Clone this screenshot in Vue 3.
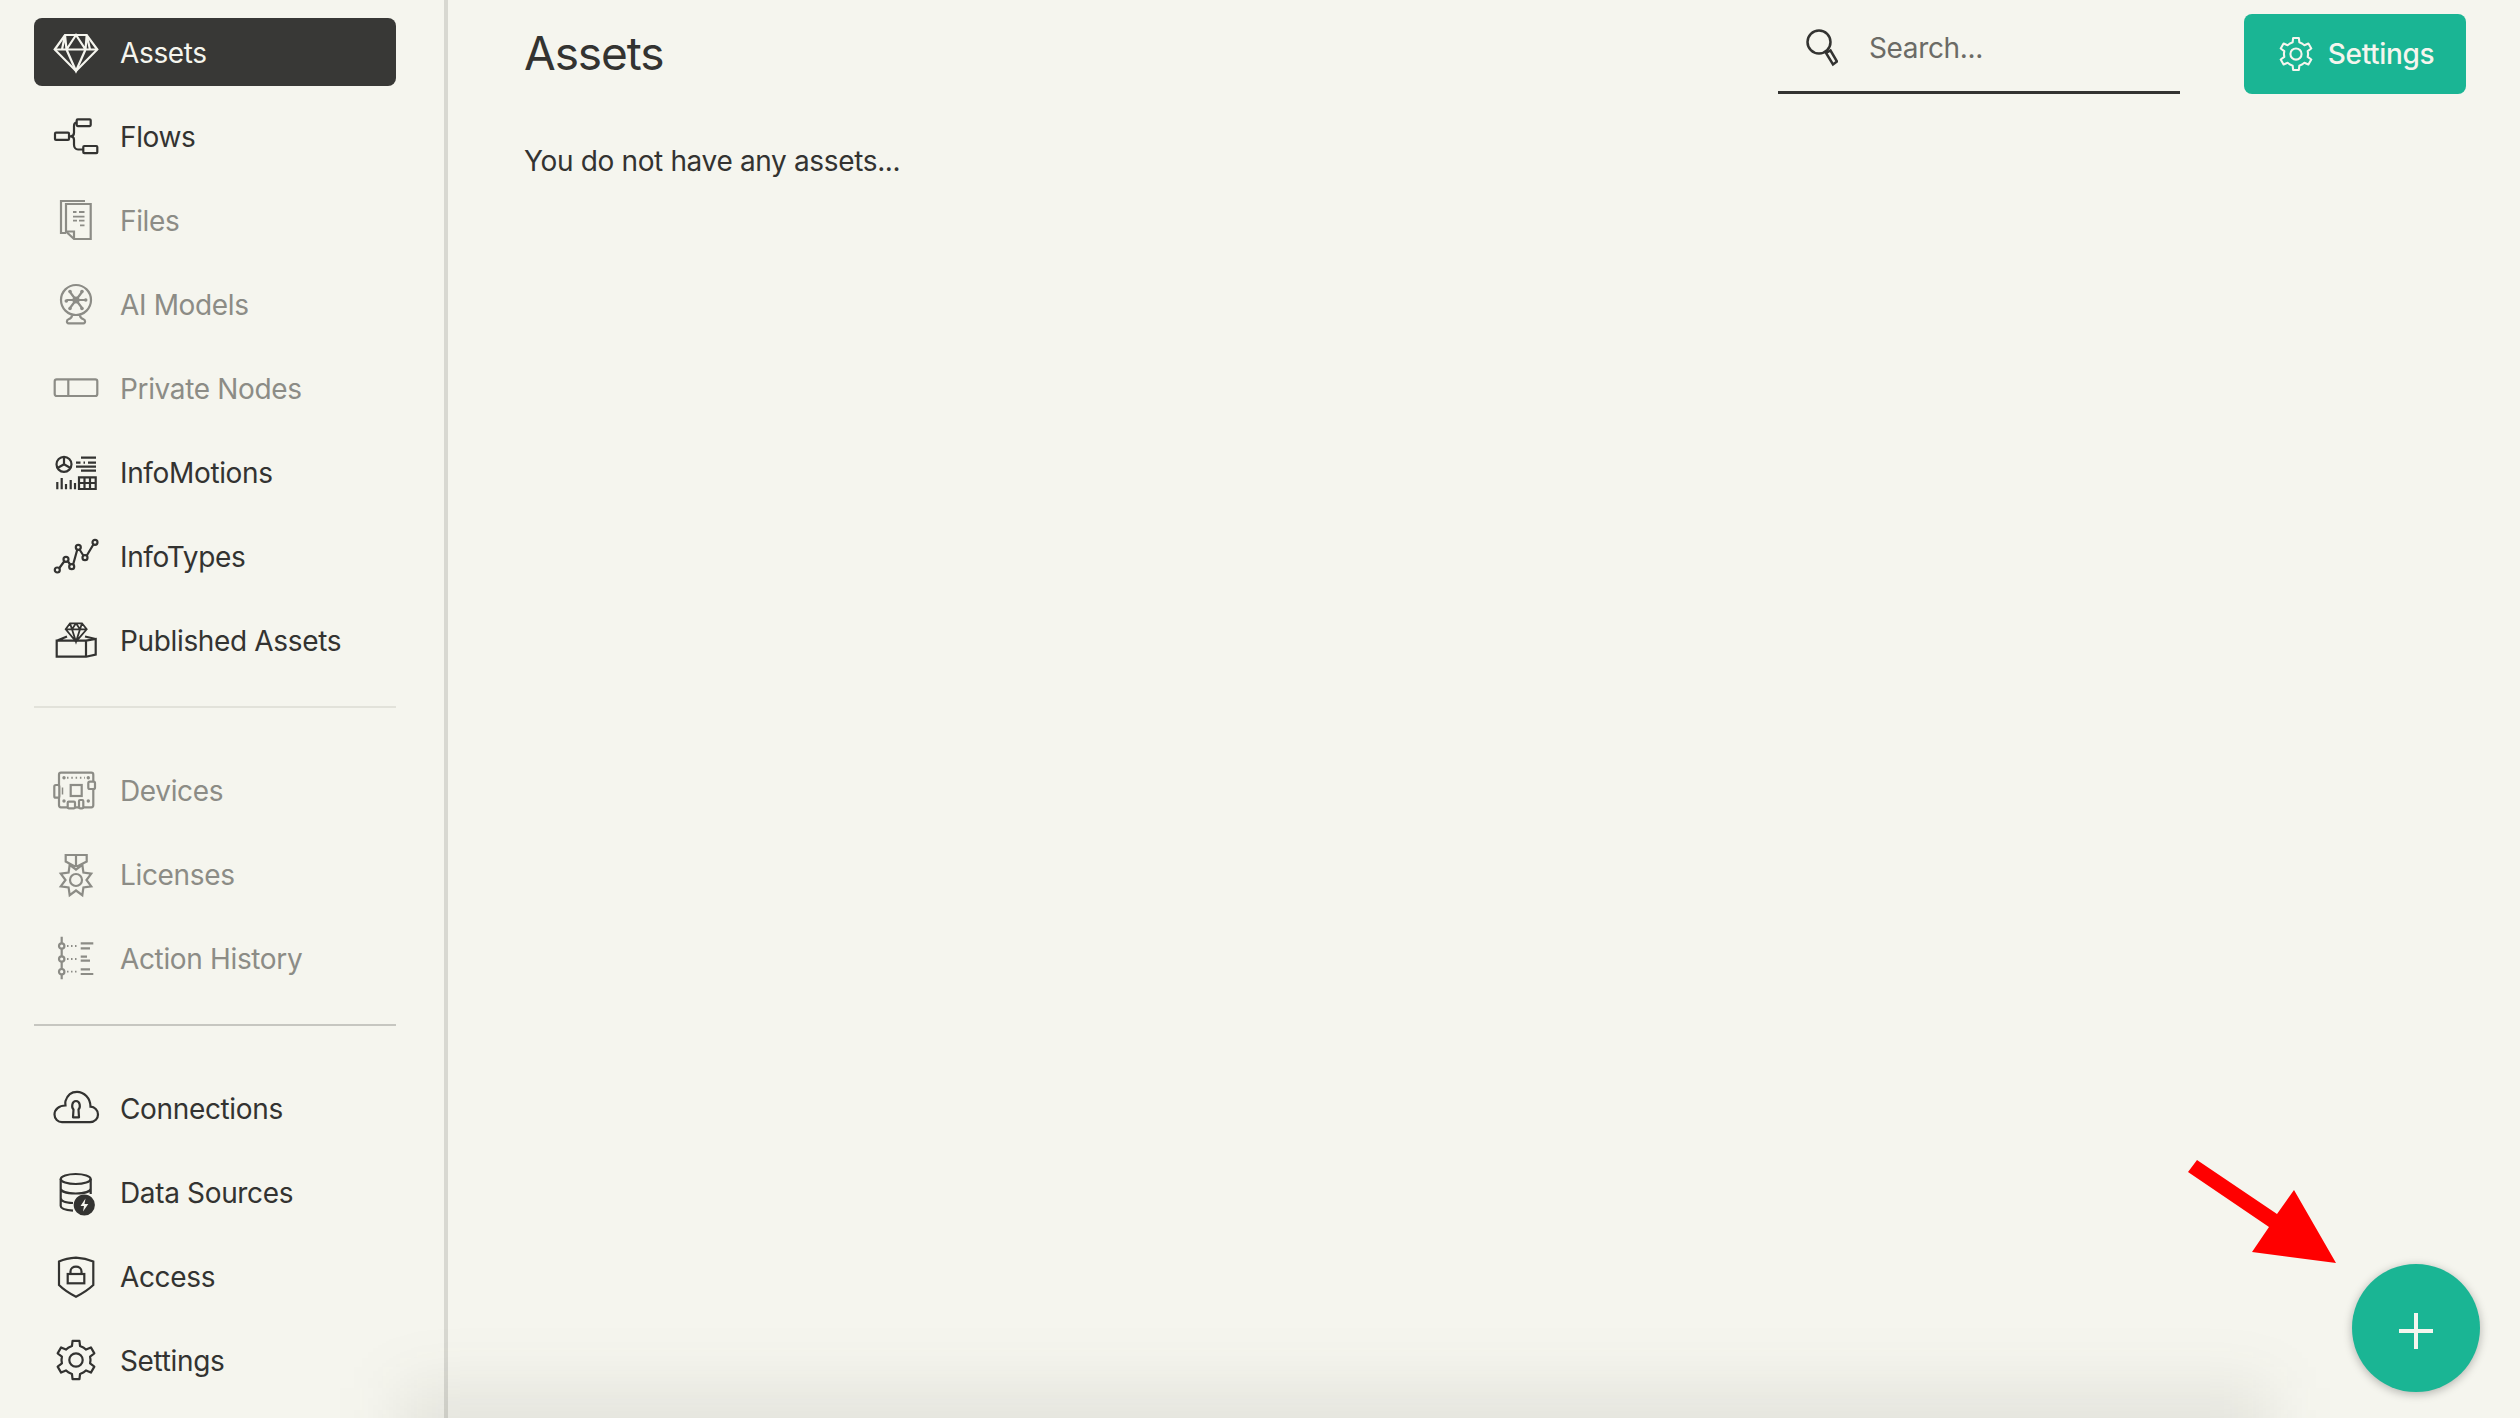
<script setup>
function gear(cx, cy, ro, ri, teeth = 6) {
  const p = []
  const step = (Math.PI * 2) / teeth
  for (let i = 0; i < teeth; i++) {
    const a = i * step - Math.PI / 2
    const pts = [
      [a - step * 0.5, ri],
      [a - step * 0.27, ri],
      [a - step * 0.17, ro],
      [a + step * 0.17, ro],
      [a + step * 0.27, ri]
    ]
    pts.forEach(([t, r]) => p.push((cx + r * Math.cos(t)).toFixed(2) + ' ' + (cy + r * Math.sin(t)).toFixed(2)))
  }
  return 'M' + p.join('L') + 'Z'
}
function star(cx, cy, ro, ri, n = 8) {
  const p = []
  for (let i = 0; i < n * 2; i++) {
    const a = (i * Math.PI) / n - Math.PI / 2 + Math.PI / n
    const r = i % 2 ? ri : ro
    p.push((cx + r * Math.cos(a)).toFixed(2) + ',' + (cy + r * Math.sin(a)).toFixed(2))
  }
  return p.join(' ')
}

const gearShape = `<path d="${gear(24, 24, 19.5, 14.5)}" stroke-linejoin="round"/><circle cx="24" cy="24" r="6.7"/>`

const icons = {
  assets: `<path d="M13 7H34.7L45.3 21.5 24 43 2.7 21.5Z"/><path d="M2.7 21.5H45.3M13 7 10 21.5M34.7 7 38 21.5M24 7 14.5 21.5 24 43 33.5 21.5ZM13 7 14.5 21.5M34.7 7 33.5 21.5"/>`,
  flows: `<rect x="24.7" y="7.3" width="14" height="6.8" rx="1"/><rect x="3" y="20.7" width="14" height="7.2" rx="1"/><rect x="31.3" y="34" width="14" height="7.2" rx="1"/><path d="M17 24.3h1.5c2.2 0 3.5-1.3 3.5-3.5v-6.8c0-2.2 1-3.4 2.7-3.4M18.5 24.3c2.2 0 3.5 1.3 3.5 3.5v4.7c0 3 1.800 5 4 5h5.300"/>`,
  files: `<path d="M33 5H9V37H14"/><path d="M14 8H38.700V43H22L14 35.500Z"/><path d="M14 35.500H22V43"/><path d="M21 16h3.500M27 16h5.500M21 20.700h11.500M21 24.700h4M27 24.700h5.500M28 29.300h4.500" stroke-width="1.800"/>`,
  ai: `<circle cx="24" cy="20" r="15"/><path d="M20 35.300c0 2-1 3.200-3.500 4-2.200.7-2 4 0 4h15c2 0 2.200-3.300 0-4-2.500-.8-3.500-2-3.500-4"/><path d="M24 20 18 12M24 20 30 12M24 20h9.500M24 20h-9.500M24 20 18 28M24 20 30 28"/><circle cx="24" cy="20" r="2.500" fill="currentColor"/><g fill="currentColor" stroke="none"><circle cx="18" cy="11.500" r="1.800"/><circle cx="30" cy="11.500" r="1.800"/><circle cx="33.700" cy="20" r="1.800"/><circle cx="14.300" cy="21" r="1.800"/><circle cx="18" cy="28.500" r="1.800"/><circle cx="30" cy="28.500" r="1.800"/></g>`,
  nodes: `<rect x="2.700" y="15.300" width="42.600" height="16.700" rx="2"/><path d="M16.300 15.300V32"/>`,
  motions: `<circle cx="12" cy="16.300" r="7.500"/><path d="M12 8.800V16.300L5.500 20M12 16.300 18.500 20"/><path d="M29 9.700H44M24 14.700H28.500M31.500 14.700H33M36 14.700H44M24 18.700H44M29 22.700H44M5.300 41.300V34M9.700 41.300V30M14 41.300V36M18.700 41.300V32M23 41.300V35"/><path d="M27 29.300H43.700V41H27ZM27 35H43.700M32.500 29.300V41M38 29.300V41"/>`,
  types: `<path d="M7 36.500 12.500 29M16 29.500 18.500 33M21 33 25.300 17.500M27.500 17.500 31.700 24M34.500 24 41.500 12.300"/><circle cx="5.300" cy="38" r="2.500"/><circle cx="14" cy="27.300" r="2.500"/><circle cx="19.700" cy="34.700" r="2.500"/><circle cx="26.300" cy="15.300" r="2.500"/><circle cx="33" cy="25.700" r="2.500"/><circle cx="43" cy="10.300" r="2.500"/>`,
  published: `<path d="M4.700 24.700H34V40.700H4.700ZM34 40.700 43.700 38.500V23L34 24.700M4.700 24.700 15 20.500M33 20.500 43.700 23"/><path d="M18 7.300H30L34.700 13.300 24 25.700 13.700 13.300ZM13.700 13.300H34.700M18 7.300 20 13.300 24 25.700 28 13.300 30 7.300M24 7.300 20 13.300M24 7.300 28 13.300" stroke-width="1.800"/>`,
  devices: `<rect x="7" y="6.700" width="34.300" height="34.600" rx="2"/><rect x="18.700" y="19" width="11" height="11"/><rect x="2.300" y="19" width="5" height="12.700" rx="1.500" fill="var(--pg)"/><rect x="36.300" y="15.700" width="6.700" height="7.300" rx="1.500" fill="var(--pg)"/><rect x="15.700" y="35.700" width="7.300" height="6.600" rx="1" fill="var(--pg)"/><rect x="27" y="34" width="4.300" height="8.300" rx="1" fill="var(--pg)"/><path d="M15 11.700H33" stroke-dasharray="1.500 2.800" stroke-width="2"/><g fill="currentColor" stroke="none"><circle cx="12" cy="11.700" r="1.700"/><circle cx="36.300" cy="11.700" r="1.700"/><circle cx="12" cy="35" r="1.700"/><circle cx="36.300" cy="35" r="1.700"/></g><path d="M10.500 21.500v7" stroke-width="1.500"/>`,
  licenses: `<path d="M13.700 5H34.700V11.500L26 16H22L13.700 11.500ZM24 5V16"/><polygon points="${star(24, 30, 16.500, 10.500)}"/><circle cx="24" cy="30" r="6"/>`,
  history: `<path d="M9.700 2.700V9.300M9.700 14.700V22.300M9.700 27.700V35M9.700 40.400V45.300"/><circle cx="9.700" cy="12" r="2.700"/><circle cx="9.700" cy="25" r="2.700"/><circle cx="9.700" cy="37.700" r="2.700"/><path d="M15 12H26M15 25H26M15 37.700H26" stroke-dasharray="1.500 2.500" stroke-width="1.800"/><path d="M28.700 9.300H41.300M28.700 14.300H38M28.700 22.700H35M28.700 26.700H38M28.700 35.300H38M28.700 40H41.300"/>`,
  connections: `<path d="M10 38.200H38C43 38.200 46 34.500 46 30.500 46 26 42.500 23 38.500 22.700 38.500 14 32 7.800 25 7.800 19.500 7.800 15.200 11.500 13.500 17 13 19 13.500 21 13.500 21.500 7 21.500 2.500 25.500 2.500 30.500 2.500 35 6 38.200 10 38.200Z"/><path d="M21.500 25.500C19.500 24 19.500 17 24 17 28.500 17 28.500 24 26.500 25.500L27 33.300H21Z" stroke-linejoin="round"/>`,
  sources: `<ellipse cx="23.700" cy="11" rx="15" ry="5"/><path d="M8.700 11V38C8.700 40.500 13 42 21 42.700M38.700 11V26M8.700 20.500C8.700 23.500 15 25.500 23.700 25.500S38.700 23.500 38.700 20.500M8.700 30C8.700 33 14 34.700 21 35"/><circle cx="32.300" cy="37" r="9.500" fill="currentColor"/><path d="M33.500 30.500 28.500 38H32L31 43.500 36.300 36H32.500Z" fill="var(--pg)" stroke="none"/>`,
  access: `<path d="M24 5.700C29 6 36 7.300 41.300 9.500V33C36 38 30 41.700 24 44.700 18 41.700 12 38 7 33V9.500C12 7.300 19 6 24 5.700Z"/><rect x="15.700" y="22" width="16.600" height="9.300"/><path d="M18.500 22V19.500C18.500 13 29.500 13 29.500 19.500V22"/>`,
  settings: gearShape
}

const groups = [
  [
    { label: 'Assets', icon: 'assets', active: true },
    { label: 'Flows', icon: 'flows' },
    { label: 'Files', icon: 'files', muted: true },
    { label: 'AI Models', icon: 'ai', muted: true },
    { label: 'Private Nodes', icon: 'nodes', muted: true },
    { label: 'InfoMotions', icon: 'motions' },
    { label: 'InfoTypes', icon: 'types' },
    { label: 'Published Assets', icon: 'published' }
  ],
  [
    { label: 'Devices', icon: 'devices', muted: true },
    { label: 'Licenses', icon: 'licenses', muted: true },
    { label: 'Action History', icon: 'history', muted: true }
  ],
  [
    { label: 'Connections', icon: 'connections' },
    { label: 'Data Sources', icon: 'sources' },
    { label: 'Access', icon: 'access' },
    { label: 'Settings', icon: 'settings' }
  ]
]
</script>

<template>
  <div class="page">
    <aside class="sidebar">
      <template v-for="(group, g) in groups" :key="g">
        <nav class="group">
          <a
            v-for="item in group"
            :key="item.label"
            class="item"
            :class="{ active: item.active, muted: item.muted }"
          >
            <svg class="icon" viewBox="0 0 48 48" v-html="icons[item.icon]"></svg>
            <span>{{ item.label }}</span>
          </a>
        </nav>
        <hr v-if="g < groups.length - 1" class="rule" :class="'rule-' + g" />
      </template>
    </aside>

    <main class="main">
      <header class="head">
        <h1>Assets</h1>
        <div class="search">
          <svg class="search-icon" viewBox="0 0 32 38">
            <circle cx="13" cy="13" r="11.500" />
            <path d="M20 24 24.500 21.500 31 32.500 27 35.500Z" />
          </svg>
          <span>Search...</span>
        </div>
        <button class="settings">
          <svg class="btn-icon" viewBox="0 0 48 48" v-html="icons.settings"></svg>
          <span>Settings</span>
        </button>
      </header>
      <p class="empty">You do not have any assets...</p>
    </main>

    <div class="shade"></div>

    <svg class="arrow" viewBox="0 0 160 120">
      <path d="M1 13 10 1 90 55 107 31 149 104 65 93 82 68Z" />
    </svg>

    <button class="fab" aria-label="Add">
      <svg viewBox="0 0 36 36" width="36" height="36"><path d="M18 0V36M1 18H35" /></svg>
    </button>
  </div>
</template>

<style>
html, body { margin: 0; background: #f5f5ee; }
</style>

<style scoped>
.page {
  --pg: #f5f5ee;
  position: relative;
  display: flex;
  width: 2520px;
  height: 1418px;
  overflow: hidden;
  background: #f5f5ee;
  font-family: Inter, "Liberation Sans", sans-serif;
  color: #333331;
}
.sidebar {
  box-sizing: border-box;
  width: 448px;
  flex: none;
  padding: 18px 48px 0 34px;
  border-right: 4px solid #d8d8d1;
}
.group { display: flex; flex-direction: column; gap: 16px; }
.item {
  display: flex;
  align-items: center;
  gap: 20px;
  height: 68px;
  padding-left: 18px;
  border-radius: 8px;
  font-size: 28px;
  line-height: 1;
  letter-spacing: -0.35px;
}
.item span { position: relative; top: 1px; }
.item.muted { color: #8c8c86; }
.item.active { background: #383836; color: #f5f5ee; }
.icon {
  width: 48px;
  height: 48px;
  flex: none;
  fill: none;
  stroke: currentColor;
  stroke-width: 2.200;
}
.rule { height: 2px; margin: 32px 0 48px; border: 0; background: #e2e2da; }
.rule-1 { background: #c6c6c0; }
.main { flex: 1; padding: 14px 54px 0 76px; position: relative; z-index: 1; }
.head { display: flex; align-items: flex-start; }
h1 {
  flex: 1;
  margin: 0;
  padding-top: 10px;
  font-size: 46px;
  font-weight: 400;
  line-height: 58px;
  letter-spacing: -1.1px;
  color: #333331;
}
.search {
  box-sizing: border-box;
  display: flex;
  align-items: center;
  gap: 31px;
  width: 402px;
  height: 80px;
  padding: 0 0 9px 28px;
  border-bottom: 3px solid #333331;
  font-size: 28px;
  letter-spacing: -0.35px;
  color: #6b6b66;
}
.search-icon {
  width: 32px;
  height: 38px;
  fill: none;
  stroke: #333331;
  stroke-width: 2.500;
}
.settings {
  display: flex;
  align-items: center;
  justify-content: center;
  gap: 12px;
  width: 222px;
  height: 80px;
  margin-left: 64px;
  padding: 0;
  border: 0;
  border-radius: 8px;
  background: #1ab594;
  color: #f5f5ee;
  font: 500 28px Inter, "Liberation Sans", sans-serif;
  letter-spacing: -0.35px;
}
.btn-icon {
  width: 40px;
  height: 40px;
  fill: none;
  stroke: currentColor;
  stroke-width: 2.500;
}
.empty { margin: 47px 0 0; font-size: 28px; line-height: 40px; letter-spacing: -0.35px; color: #333331; }
.shade {
  position: absolute;
  left: 400px;
  right: 250px;
  bottom: -60px;
  height: 90px;
  background: rgba(60, 60, 40, 0.09);
  filter: blur(32px);
  pointer-events: none;
}
.arrow {
  position: absolute;
  left: 2187px;
  top: 1159px;
  width: 160px;
  height: 120px;
  fill: #ff0000;
  z-index: 2;
}
.fab {
  position: absolute;
  left: 2352px;
  top: 1264px;
  display: flex;
  align-items: center;
  justify-content: center;
  width: 128px;
  height: 128px;
  padding: 6px 0 0;
  border: 0;
  border-radius: 50%;
  background: #1ab594;
  box-shadow: 0 2px 10px rgba(0, 0, 0, 0.28);
  z-index: 2;
}
.fab path { fill: none; stroke: #f5f5ee; stroke-width: 4; }
</style>
